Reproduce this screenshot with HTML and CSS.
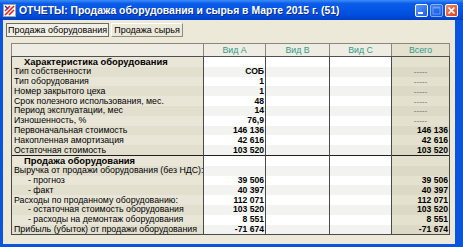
FILE: index.html
```html
<!DOCTYPE html>
<html lang="ru">
<head>
    <meta charset="UTF-8">
    <title>ОТЧЕТЫ</title>
    <link rel="stylesheet" href="styles.css">
</head>
<body>
    <div class="window">
        <div class="titlebar">
            <svg class="app-icon" width="13" height="13" viewBox="0 0 13 13">
                <rect x="0.5" y="0.5" width="12" height="12" fill="#fff" stroke="#9aa"/>
                <path d="M2 11 L11 2 M2 7 L7 2 M6 11 L11 6" stroke="#d22" stroke-width="1.6"/>
                <path d="M2 2 L5 5" stroke="#23a" stroke-width="1.2"/>
            </svg>
            <span class="title">ОТЧЕТЫ: Продажа оборудования и сырья в Марте 2015 г. (51)</span>
            <div class="buttons">
                <span class="wbtn"><svg width="13" height="13" viewBox="0 0 13 13"><rect x="3" y="8" width="5" height="2" fill="#fff"/></svg></span>
                <span class="wbtn off"><svg width="13" height="13" viewBox="0 0 13 13"><rect x="3" y="3" width="7" height="7" fill="none" stroke="#c8d8f8" stroke-width="1"/><rect x="3" y="3" width="7" height="1.5" fill="#c8d8f8"/></svg></span>
                <span class="wbtn close"><svg width="13" height="13" viewBox="0 0 13 13"><path d="M3.5 3.5 L9.5 9.5 M9.5 3.5 L3.5 9.5" stroke="#fff" stroke-width="1.7"/></svg></span>
            </div>
        </div>
        <div class="client">
            <div class="tabs">
                <span class="tab active">Продажа оборудования</span>
                <span class="tab">Продажа сырья</span>
            </div>
            <table class="grid">
                <thead>
                    <tr>
                        <th class="c0"></th>
                        <th>Вид А</th>
                        <th>Вид В</th>
                        <th>Вид С</th>
                        <th class="tot">Всего</th>
                    </tr>
                </thead>
                <tbody>
                    <tr><td class="c0 sect">Характеристика оборудования</td><td></td><td></td><td></td><td class="tot"></td></tr>
                    <tr class="alt"><td class="c0">Тип собственности</td><td class="num">СОБ</td><td></td><td></td><td class="tot dash">-----</td></tr>
                    <tr><td class="c0">Тип оборудования</td><td class="num">1</td><td></td><td></td><td class="tot dash">-----</td></tr>
                    <tr class="alt"><td class="c0">Номер закрытого цеха</td><td class="num">1</td><td></td><td></td><td class="tot dash">-----</td></tr>
                    <tr><td class="c0">Срок полезного использования, мес.</td><td class="num">48</td><td></td><td></td><td class="tot dash">-----</td></tr>
                    <tr class="alt"><td class="c0">Период эксплуатации, мес</td><td class="num">14</td><td></td><td></td><td class="tot dash">-----</td></tr>
                    <tr><td class="c0">Изношенность, %</td><td class="num">76,9</td><td></td><td></td><td class="tot dash">-----</td></tr>
                    <tr class="alt"><td class="c0">Первоначальная стоимость</td><td class="num">146 136</td><td></td><td></td><td class="tot num">146 136</td></tr>
                    <tr><td class="c0">Накопленная амортизация</td><td class="num">42 616</td><td></td><td></td><td class="tot num">42 616</td></tr>
                    <tr class="alt"><td class="c0">Остаточная стоимость</td><td class="num">103 520</td><td></td><td></td><td class="tot num">103 520</td></tr>
                    <tr class="split"><td class="c0 sect">Продажа оборудования</td><td></td><td></td><td></td><td class="tot"></td></tr>
                    <tr class="alt"><td class="c0">Выручка от продажи оборудования (без НДС):</td><td></td><td></td><td></td><td class="tot"></td></tr>
                    <tr><td class="c0 sub">- прогноз</td><td class="num">39 506</td><td></td><td></td><td class="tot num">39 506</td></tr>
                    <tr class="alt"><td class="c0 sub">- факт</td><td class="num">40 397</td><td></td><td></td><td class="tot num">40 397</td></tr>
                    <tr><td class="c0">Расходы по проданному оборудованию:</td><td class="num">112 071</td><td></td><td></td><td class="tot num">112 071</td></tr>
                    <tr class="alt"><td class="c0 sub">- остаточная стоимость оборудования</td><td class="num">103 520</td><td></td><td></td><td class="tot num">103 520</td></tr>
                    <tr><td class="c0 sub">- расходы на демонтаж оборудования</td><td class="num">8 551</td><td></td><td></td><td class="tot num">8 551</td></tr>
                    <tr class="alt"><td class="c0">Прибыль (убыток) от продажи оборудования</td><td class="num">-71 674</td><td></td><td></td><td class="tot num">-71 674</td></tr>
                </tbody>
            </table>
        </div>
    </div>
</body>
</html>
```

FILE: styles.css
```css
body { margin: 0; font-family: "Liberation Sans", Arial, sans-serif; }
.window { width: 463px; height: 247px; display: flex; flex-direction: column; background: #0A55E0; }
.titlebar { height: 20px; display: flex; align-items: center; gap: 3px; padding: 0 5px 0 3px;
    background: linear-gradient(#3C8CF8 0%, #0B5CE8 18%, #0354E4 55%, #0049D8 85%, #003EC0 100%);
    color: #fff; font-size: 10.4px; font-weight: bold; }
.app-icon { flex: none; }
.title { flex: 1; white-space: nowrap; text-shadow: 1px 1px #0A2A8A; }
.buttons { display: flex; gap: 2px; }
.wbtn { width: 13px; height: 13px; border: 1px solid #fff; border-radius: 2px; box-sizing: border-box;
    background: linear-gradient(135deg, #5C94F8, #1F60E8); display: flex; }
.wbtn svg { margin: -1px; }
.wbtn.off { opacity: 0.55; }
.wbtn.close { background: linear-gradient(135deg, #F08A6A, #D8401C); }
.client { flex: 1; background: #ECE9D8; margin: 0 8px 3px 3px; padding: 3px 0 0 3px; }
.tabs { display: flex; gap: 2px; height: 14px; font-size: 9px; }
.tab { border: 1px solid #8E8C82; border-left-color: #fff; border-top-color: #fff; padding: 0 2px; line-height: 12px; }
.tab.active { border: 1px solid #6E6C64; background: #F2F0E6; padding: 0 1px; }
.grid { border-collapse: collapse; margin: 6px 0 0 5px; table-layout: fixed; width: 439px; font-size: 8.8px; }
.grid th { height: 12px; padding: 0; font-weight: normal; color: #2F9A88; background: #EFEDE3;
    border: 1px solid #8A887E; border-bottom-color: #505050; line-height: 11px; }
.grid th.c0 { width: 191px; }
.grid th:nth-child(2) { width: 61px; }
.grid th:nth-child(3) { width: 63px; }
.grid th:nth-child(4) { width: 61px; }
.grid td { height: 9.8px; padding: 0 1px; line-height: 9px; white-space: nowrap; overflow: hidden;
    background: #FFFFFF; border-right: 1px solid #4A4A4A; }
.grid tr.alt td { background: #F3F3F1; }
.grid td.c0 { background: #E9E6D8; color: #000; border-left: 1px solid #4A4A4A; padding-left: 2px; }
.grid tr.alt td.c0 { background: #E2DFCF; }
.grid td.tot, .grid th.tot { background: #E4E1CF; }
.grid tr.alt td.tot { background: #DCD9C6; }
.grid tr.split td { border-top: 1px solid #202020; }
.grid tr:last-child td { border-bottom: 1px solid #4A4A4A; }
.sect { color: #8E1B1B; font-weight: bold; font-size: 9.4px; padding-left: 12px !important; }
.sub { padding-left: 16px !important; }
.num { text-align: right; font-weight: bold; font-size: 8.6px; color: #000; }
.dash { text-align: center; color: #6A6A6A; font-size: 8px; }
```
